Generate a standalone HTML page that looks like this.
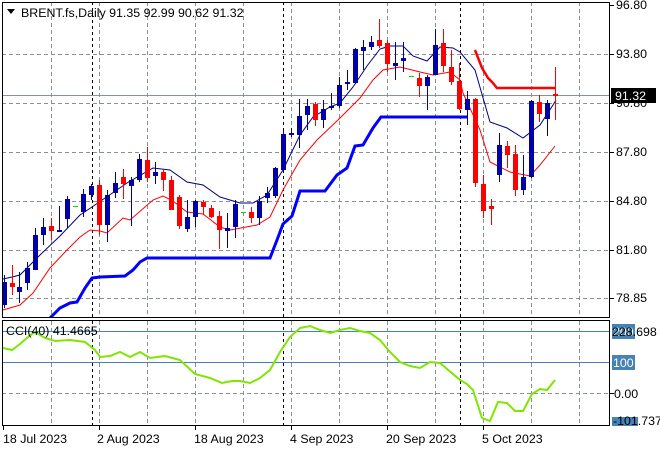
<!DOCTYPE html>
<html><head><meta charset="utf-8"><style>
html,body{margin:0;padding:0;background:#fff;width:660px;height:450px;overflow:hidden}
svg{display:block}
text{font-family:"Liberation Sans",sans-serif;font-size:12.4px;fill:#000}
</style></head><body>
<svg width="660" height="450" viewBox="0 0 660 450" xmlns="http://www.w3.org/2000/svg">
<defs>
<clipPath id="c1"><rect x="2" y="2" width="608" height="316"/></clipPath>
<clipPath id="c2"><rect x="2" y="321" width="608" height="104"/></clipPath>
</defs>
<rect width="660" height="450" fill="#fff"/>
<g stroke="#8a9099" stroke-width="1" stroke-dasharray="4,3" fill="none">
<path d="M51.5 2V318M99.5 2V318M147.5 2V318M195.5 2V318M243.5 2V318M291.5 2V318M339.5 2V318M387.5 2V318M435.5 2V318M483.5 2V318M531.5 2V318M579.5 2V318"/>
<path d="M2 54.5H610M2 103.5H610M2 152.5H610M2 201.5H610M2 250.5H610M2 298.5H610"/>
<path d="M51.5 321V425M99.5 321V425M147.5 321V425M195.5 321V425M243.5 321V425M291.5 321V425M339.5 321V425M387.5 321V425M435.5 321V425M483.5 321V425M531.5 321V425M579.5 321V425"/>
<path d="M2 393.5H610"/>
</g>
<g stroke="#000" stroke-width="1" stroke-dasharray="3,3" fill="none">
<path d="M92.5 2V318M283.5 2V318M460.5 2V318M92.5 321V425M283.5 321V425M460.5 321V425"/>
</g>
<path d="M2 95.5H610" stroke="#8a9099" stroke-width="1"/>
<g clip-path="url(#c1)">
<polyline fill="none" stroke="#0000ff" stroke-width="3" points="50,318 60,308 70,303 77,302 85,288 92,278 100,277 125,276 133,270 140,262 147,258 270,258 277,240 283,224 292,216 300,191 325,191 337,175 347,168 355,146 363,145 373,128 381,117 467,117"/>
<polyline fill="none" stroke="#ff0000" stroke-width="2.5" points="475,50 482,68 488,78 492,82 497,88 555,88"/>
<polyline fill="none" stroke="#000080" stroke-width="1" points="3,279 12,277 20,275 40,255 60,236 80,215 92,207 127,183 153,168 170,170 187,182 203,185 220,197 240,203 253,203 267,195 283,170 300,135 313,117 330,107 340,103 353,87 367,66 380,49 390,46 403,46 413,56 427,61 440,47 453,48 460,52 475,70 490,122 507,128 523,138 540,125 553,105 556,100"/>
<polyline fill="none" stroke="#ff0000" stroke-width="1" points="3,310 20,305 33,293 50,268 67,250 80,237 90,230 100,231 107,233 123,218 130,220 153,200 163,196 173,201 187,212 203,214 220,227 230,230 257,225 270,217 283,190 300,160 317,140 340,118 360,98 373,80 383,70 400,67 420,72 433,75 450,72 460,80 463,93 480,130 490,162 510,172 530,176 540,165 555,146"/>
<path fill="none" stroke="#0000a8" stroke-width="1" d="M4.5 275V308 M19.5 272V303 M27.5 262V290 M35.5 228V270 M43.5 218V245 M59.5 206V232 M67.5 196V228 M83.5 189V217 M91.5 184V200 M107.5 190V242 M115.5 172V198 M131.5 177V226 M139.5 154V182 M155.5 162V184 M187.5 200V232 M195.5 200V227 M227.5 213V248 M235.5 200V238 M259.5 196V225 M267.5 187V203 M275.5 167V198 M283.5 130V170 M291.5 128V137 M299.5 99V148 M307.5 99V130 M323.5 100V128 M331.5 93V110 M339.5 77V108 M347.5 70V90 M355.5 48V84 M363.5 40V70 M371.5 36V50 M395.5 42V80 M403.5 42V72 M427.5 75V110 M435.5 29V75 M467.5 91V125 M499.5 133V182 M523.5 155V195 M531.5 100V178 M547.5 100V136"/>
<path fill="#0000a8" d="M2 282h5V305h-5z M17 287h5V292h-5z M25 268h5V283h-5z M33 235h5V270h-5z M41 227h5V235h-5z M57 230h5V232h-5z M65 199h5V219h-5z M81 194h5V212h-5z M89 186h5V195h-5z M105 195h5V225h-5z M113 183h5V193h-5z M129 180h5V186h-5z M137 159h5V180h-5z M153 172h5V176h-5z M185 217h5V229h-5z M193 201h5V217h-5z M225 228h5V231h-5z M233 204h5V227h-5z M257 201h5V218h-5z M265 193h5V198h-5z M273 168h5V196h-5z M281 134h5V170h-5z M289 133h5V135h-5z M297 116h5V135h-5z M305 106h5V115h-5z M321 109h5V120h-5z M329 106h5V108h-5z M337 85h5V106h-5z M345 82h5V84h-5z M353 49h5V83h-5z M361 47h5V51h-5z M369 42h5V47h-5z M393 63h5V66h-5z M401 58h5V61h-5z M425 77h5V86h-5z M433 45h5V75h-5z M465 99h5V110h-5z M497 145h5V175h-5z M521 177h5V190h-5z M529 101h5V177h-5z M545 103h5V119h-5z"/>
<path fill="none" stroke="#ff0000" stroke-width="1" d="M12.5 265V295 M51.5 218V240 M99.5 180V235 M123.5 169V199 M147.5 147V182 M163.5 170V191 M171.5 176V210 M179.5 195V229 M203.5 200V215 M211.5 205V218 M219.5 211V249 M251.5 207V223 M315.5 102V126 M379.5 19V48 M387.5 40V72 M419.5 73V97 M443.5 29V72 M451.5 50V85 M459.5 63V110 M475.5 98V187 M483.5 175V218 M491.5 199V225 M507.5 141V168 M515.5 145V196 M539.5 95V122 M555.5 67V120"/>
<path fill="#ff0000" d="M10 283h5V287h-5z M49 226h5V231h-5z M97 185h5V225h-5z M121 177h5V184h-5z M145 160h5V178h-5z M161 172h5V180h-5z M169 180h5V210h-5z M177 197h5V226h-5z M201 202h5V207h-5z M209 208h5V217h-5z M217 216h5V230h-5z M249 212h5V218h-5z M313 104h5V120h-5z M377 40h5V46h-5z M385 43h5V64h-5z M417 78h5V86h-5z M441 43h5V66h-5z M449 67h5V82h-5z M457 81h5V109h-5z M473 99h5V183h-5z M481 184h5V211h-5z M489 206h5V209h-5z M505 146h5V155h-5z M513 154h5V190h-5z M537 102h5V114h-5z M553 94h5V96h-5z"/>
<path fill="none" stroke="#00dd00" stroke-width="1" d="M73 206.5h5 M241 212.5h5 M409 76.5h5"/>
</g>
<path d="M2 331.5H610M2 362.5H610" stroke="#4682b4" stroke-width="1"/>
<g clip-path="url(#c2)">
<polyline fill="none" stroke="#7fe600" stroke-width="2" points="3,348 12,350 20,344 28,337 35,332 45,338 55,341 70,340 85,342 95,350 100,357 110,356 120,352 130,357 140,352 150,358 165,356 180,360 195,374 210,378 222,383 232,381 240,381 250,383 260,378 270,370 280,352 290,337 300,328 310,326 320,330 330,333 340,330 350,328 360,331 370,333 380,340 390,352 400,362 410,366 420,368 430,362 440,363 460,380 467,384 473,390 482,418 490,421 498,402 507,403 515,411 523,411 532,394 540,389 547,390 555,380"/>
</g>
<rect x="2.5" y="2.5" width="607" height="315" fill="none" stroke="#000" stroke-width="1"/>
<rect x="2.5" y="320.5" width="607" height="105" fill="none" stroke="#000" stroke-width="1"/>
<path d="M7 9h8l-4 5z" fill="#000"/>
<text x="21" y="17">BRENT.fs,Daily  91.35 92.99 90.62 91.32</text>
<text x="6" y="335">CCI(40) 41.4665</text>
<path d="M610 5.5h4M610 54.5h4M610 103.5h4M610 152.5h4M610 201.5h4M610 250.5h4M610 298.5h4M610 393.5h4" stroke="#000"/>
<text x="616" y="9">96.80</text>
<text x="616" y="58">93.80</text>
<text x="616" y="107">90.80</text>
<text x="616" y="156">87.80</text>
<text x="616" y="205">84.80</text>
<text x="616" y="254">81.80</text>
<text x="616" y="302">78.85</text>
<rect x="611" y="88" width="45" height="15" fill="#000"/>
<text x="615" y="100" style="fill:#fff">91.32</text>
<rect x="612" y="324" width="23" height="15" fill="#4682b4"/>
<text x="613" y="336" style="fill:#fff">200</text>
<text x="612" y="336">228.698</text>
<rect x="612" y="355" width="23" height="15" fill="#4682b4"/>
<text x="613" y="367" style="fill:#fff">100</text>
<text x="614" y="398">0.00</text>
<rect x="612" y="417" width="26" height="9" fill="#4682b4"/>
<text x="613" y="425">-101.737</text>
<path d="M3.5 426v4M99.5 426v4M195.5 426v4M291.5 426v4M387.5 426v4M483.5 426v4" stroke="#000"/>
<text x="3" y="443">18 Jul 2023</text>
<text x="97" y="443">2 Aug 2023</text>
<text x="194" y="443">18 Aug 2023</text>
<text x="290" y="443">4 Sep 2023</text>
<text x="386" y="443">20 Sep 2023</text>
<text x="482" y="443">5 Oct 2023</text>
</svg>
</body></html>
